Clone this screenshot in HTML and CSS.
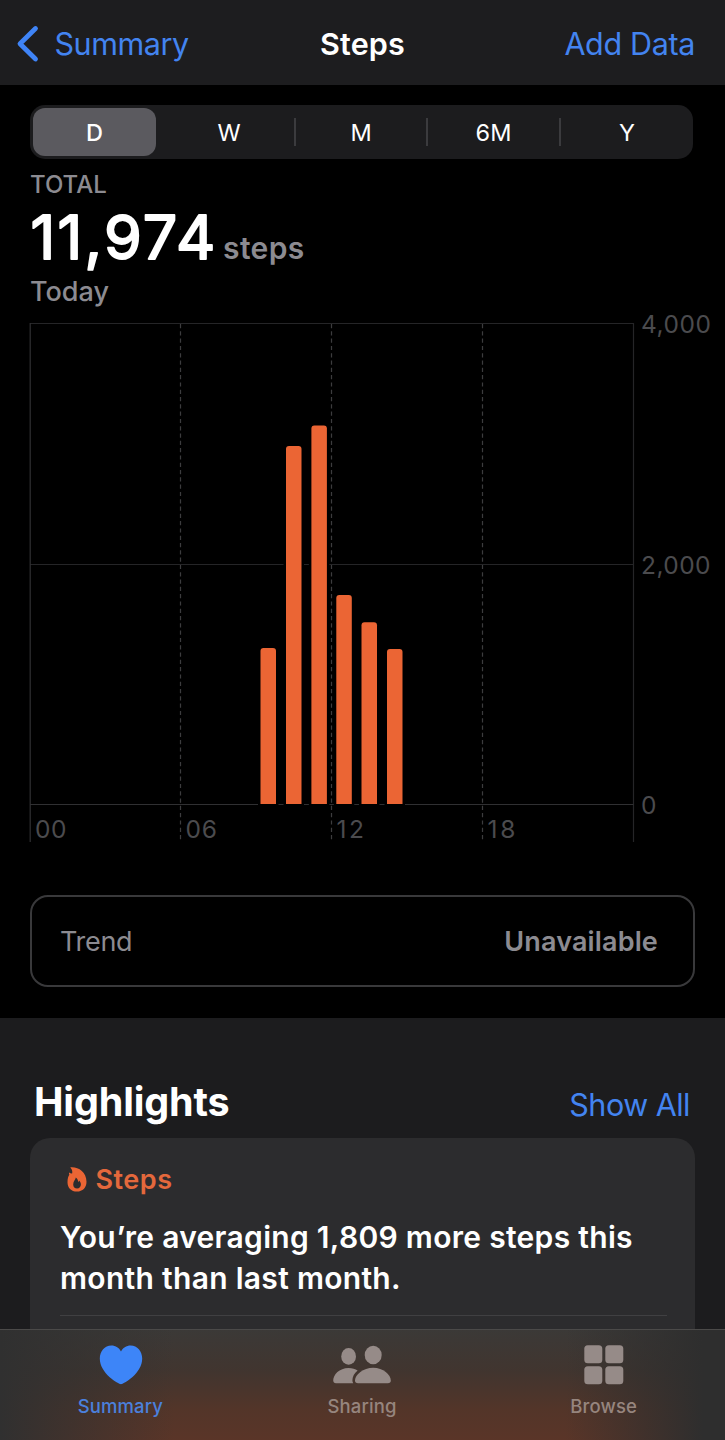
FILE: index.html
```
<!DOCTYPE html>
<html lang="en">
<head>
<meta charset="utf-8">
<title>Steps</title>
<link rel="stylesheet" href="styles.css">
</head>
<body>
<div class="screen">
  <header class="nav">
    <a class="nav-back">
      <svg class="chevron" width="24" height="38" viewBox="0 0 24 38"><path d="M19.500 3.500 L4 18.800 L19.500 34" /></svg>
      <span class="nav-link">Summary</span>
    </a>
    <h1 class="nav-title">Steps</h1>
    <a class="nav-link nav-action">Add Data</a>
  </header>

  <main class="content">
    <section class="overview">
      <div class="segments">
        <span class="segment selected">D</span>
        <span class="segment">W</span>
        <span class="segment divided">M</span>
        <span class="segment divided">6M</span>
        <span class="segment divided">Y</span>
      </div>
      <div class="total-label">TOTAL</div>
      <div class="total-row">
        <svg class="total-value" width="190" height="76" viewBox="0 0 190 76"><text x="0.500" y="59.800" textLength="185">11,974</text></svg>
        <span class="total-unit">steps</span>
      </div>
      <div class="total-date">Today</div>
    </section>

    <svg class="chart" width="725" height="541" viewBox="0 304 725 541">
      <g class="grid">
        <path d="M30 323.5H633.5M30 564.5H633.5M633.5 323V842" />
        <path class="axis" d="M30.2 323V842M30 804.5H633.5" />
      </g>
      <path class="dashes" d="M180.5 324V840M331.5 324V840M482.5 324V840" />
      <g class="bars">
        <path d="M260.5 804V651q0-3 3-3h9.500q3 0 3 3V804z" />
        <path d="M286 804V449q0-3 3-3h9.500q3 0 3 3V804z" />
        <path d="M311.400 804V428.500q0-3 3-3h9.500q3 0 3 3V804z" />
        <path d="M336.300 804V598q0-3 3-3h9.500q3 0 3 3V804z" />
        <path d="M361.500 804V625.300q0-3 3-3h9.500q3 0 3 3V804z" />
        <path d="M387 804V652q0-3 3-3h9.500q3 0 3 3V804z" />
      </g>
      <g class="ticks">
        <text x="641" y="332.600" textLength="70">4,000</text>
        <text x="641" y="573.600" textLength="69.500">2,000</text>
        <text x="641" y="813.600">0</text>
        <text x="35" y="837.500" textLength="31.500">00</text>
        <text x="185.500" y="837.500" textLength="31.500">06</text>
        <text x="336.500" y="837.500" textLength="27.500">12</text>
        <text x="487.500" y="837.500" textLength="28">18</text>
      </g>
    </svg>

    <div class="trend">
      <span class="trend-name">Trend</span>
      <span class="trend-value">Unavailable</span>
    </div>

    <section class="highlights">
      <div class="highlights-head">
        <h2 class="highlights-title">Highlights</h2>
        <a class="show-all">Show All</a>
      </div>
      <article class="card">
        <div class="card-head">
          <svg class="flame" width="20" height="25" viewBox="0 0 20 25"><path fill-rule="evenodd" d="M3.200 0.400C10.500 -0.600 19.500 4.500 19.500 14.800C19.500 20.800 15.600 24.600 10 24.600C4.200 24.600 0.500 20.700 0.500 15.200C0.500 11.700 1.300 9 2.400 7.800C1.900 6.900 1.900 6.200 2.200 5.500C3.300 6.300 4.100 6.600 5.100 6.400C5.700 4.200 4.900 2 3.200 0.400ZM8.700 10.500C9 12.500 6.200 14 6.200 17.400C6.200 20 7.800 21.500 10.100 21.500C12.400 21.500 13.900 20 13.900 17.600C13.900 15.900 13.100 14.400 12 13.600C11.900 14.500 11.600 14.900 11 15.200C11.300 13.200 10.400 11.500 8.700 10.500Z" /></svg>
          <span class="card-name">Steps</span>
        </div>
        <p class="card-text">You’re averaging 1,809 more steps this<br>month than last month.</p>
        <div class="card-rule"></div>
      </article>
    </section>
  </main>

  <nav class="tabs">
    <a class="tab active">
      <svg width="44" height="40" viewBox="0 0 44 40"><path d="M22 39.300C19.500 39.300 0.800 28.500 0.800 13.600C0.800 5.900 5.800 0.400 12.300 0.400C16.800 0.400 20.200 2.800 22 6.400C23.800 2.800 27.200 0.400 31.700 0.400C38.200 0.400 43.200 5.900 43.200 13.600C43.200 28.500 24.500 39.300 22 39.300Z" /></svg>
      <span class="tab-name">Summary</span>
    </a>
    <a class="tab">
      <svg width="60" height="40" viewBox="0 0 60 40">
        <ellipse cx="16.600" cy="11.400" rx="7.400" ry="8.300" />
        <path d="M16.600 22.900C20.200 22.900 23.400 23.900 25.600 25.400C22.300 28 20.400 31.700 20.400 35.300C20.400 36.400 20.600 37.500 21.200 38.300H4C2.300 38.300 1.200 37.200 1.200 35.600C1.200 29.500 7.300 22.900 16.600 22.900Z" />
        <ellipse cx="41.200" cy="10" rx="8.500" ry="9.300" />
        <path d="M41.200 22.700C51.200 22.700 58.800 29.500 58.800 35.600C58.800 37.300 57.800 38.300 55.800 38.300H26C24 38.300 23 37.300 23 35.600C23 29.500 31.200 22.700 41.200 22.700Z" />
      </svg>
      <span class="tab-name">Sharing</span>
    </a>
    <a class="tab">
      <svg width="40" height="40" viewBox="0 0 40 40">
        <rect x="0.300" y="0.300" width="18" height="18" rx="3.500" />
        <rect x="21.300" y="0.300" width="18" height="18" rx="3.500" />
        <rect x="0.300" y="21.300" width="18" height="18" rx="3.500" />
        <rect x="21.300" y="21.300" width="18" height="18" rx="3.500" />
      </svg>
      <span class="tab-name">Browse</span>
    </a>
  </nav>
</div>
</body>
</html>
```

FILE: styles.css
```
* { box-sizing: border-box; }
body {
  margin: 0;
  background: #000;
  color: #fff;
  font-family: Inter, "Liberation Sans", sans-serif;
}
h1, h2, p { margin: 0; }
svg { display: block; flex: none; }

.screen {
  width: 725px;
  height: 1440px;
  display: flex;
  flex-direction: column;
  overflow: hidden;
}

/* Navigation bar */
.nav {
  flex: none;
  height: 85px;
  padding: 2px 30px 0 16px;
  display: grid;
  grid-template-columns: 1fr auto 1fr;
  align-items: center;
  background: #1d1d1f;
}
.nav-back { display: flex; align-items: center; gap: 14.5px; }
.chevron { fill: none; stroke: #3f84f7; stroke-width: 4.8; stroke-linecap: round; stroke-linejoin: round; }
.nav-link { color: #4384f0; font-size: 30.5px; letter-spacing: -0.45px; }
.nav-title { margin-left: 14px; font-size: 30.5px; font-weight: 600; letter-spacing: 0.15px; }
.nav-action { justify-self: end; letter-spacing: -0.35px; }

.content { flex: 1; min-height: 0; overflow: hidden; }

/* Period picker and total */
.overview { padding: 20px 32px 0 30px; }
.segments {
  height: 54px;
  display: grid;
  grid-template-columns: 131px 130px 132px 133px 1fr;
  padding: 3px 0 3px 3px;
  border-radius: 15px;
  background: #1c1c1e;
}
.segment {
  display: flex;
  align-items: center;
  justify-content: center;
  font-size: 23.5px;
}
.segment.selected { margin: 0 8px 0 0; border-radius: 12px; background: #5b5a5f; font-weight: 500; }
.segment.divided {
  padding-left: 2px;
  background: linear-gradient(#3b3b3e, #3b3b3e) 0 center / 2px 28px no-repeat;
}
.total-label {
  margin-top: 12px;
  font-size: 24px;
  font-weight: 500;
  line-height: 28px;
  color: #8c8b91;
}
.total-row { display: flex; height: 76px; }
.total-value { font-size: 61px; font-weight: 400; fill: #fff; stroke: #fff; stroke-width: 1.9px; stroke-linejoin: round; }
.total-unit {
  padding-top: 31px;
  margin-left: 3px;
  font-size: 30px;
  font-weight: 600;
  line-height: 36px;
  letter-spacing: 0.4px;
  color: #8c8b91;
}
.total-date { font-size: 27px; font-weight: 500; line-height: 34px; color: #8c8b91; }

/* Hourly chart */
.chart { margin-top: -5px; }
.grid { fill: none; stroke: #252527; stroke-width: 1.2; }
.axis { stroke: #303032; }
.dashes { fill: none; stroke: #3c3c3e; stroke-width: 1.2; stroke-dasharray: 4.2 3.1; }
.bars { fill: #eb6534; stroke: #000; stroke-width: 5; paint-order: stroke; }
.ticks { font-size: 24.5px; fill: #4b4b4e; }

/* Trend */
.trend {
  height: 92px;
  margin: 50px 30px 31px;
  padding: 0 35px 0 28px;
  display: flex;
  align-items: center;
  justify-content: space-between;
  border: 2px solid #39393b;
  border-radius: 18px;
  font-size: 27px;
  color: #8c8b91;
}
.trend-name { letter-spacing: -0.3px; }
.trend-value { font-weight: 600; letter-spacing: 0.15px; }

/* Highlights */
.highlights { height: 400px; padding: 60px 30px 0; background: #1c1c1e; }
.highlights-head {
  height: 60px;
  padding: 0 5px 0 4px;
  display: flex;
  align-items: baseline;
  justify-content: space-between;
  line-height: 48px;
}
.highlights-title { font-size: 39.5px; font-weight: 700; letter-spacing: -0.15px; }
.show-all { color: #4384f0; font-size: 30.5px; letter-spacing: -0.5px; }
.card { height: 260px; padding: 24px 28px 0 30px; border-radius: 20px; background: #2c2c2e; }
.card-head {
  display: flex;
  align-items: center;
  gap: 9px;
  padding-left: 6.5px;
  font-size: 27px;
  font-weight: 600;
  line-height: 34px;
  letter-spacing: 0.5px;
  color: #e4683c;
}
.card-name { padding-top: 1px; }
.flame { fill: #eb6534; }
.card-text {
  margin-top: 20px;
  font-size: 30px;
  font-weight: 600;
  line-height: 41px;
  letter-spacing: 0.3px;
  white-space: nowrap;
}
.card-rule { height: 1px; margin-top: 16px; background: #404042; }

/* Tab bar */
.tabs {
  flex: none;
  height: 111px;
  padding-top: 15px;
  display: grid;
  grid-template-columns: repeat(3, 1fr);
  border-top: 1px solid #4b4a49;
  background:
    linear-gradient(90deg, #303030 0, rgba(48, 48, 48, 0) 24%, rgba(48, 48, 48, 0) 78%, #2e2e2e 97%),
    linear-gradient(#3b3937 0, #41352f 38%, #533529 72%, #5a3528 100%);
}
.tab {
  display: flex;
  flex-direction: column;
  align-items: center;
  gap: 9px;
  fill: #968b88;
  color: #96857e;
}
.tab.active { fill: #3d85f8; color: #4b80dc; }
.tab-name { margin-right: 1px; font-size: 18.5px; font-weight: 500; line-height: 24px; letter-spacing: 0.1px; }
```
